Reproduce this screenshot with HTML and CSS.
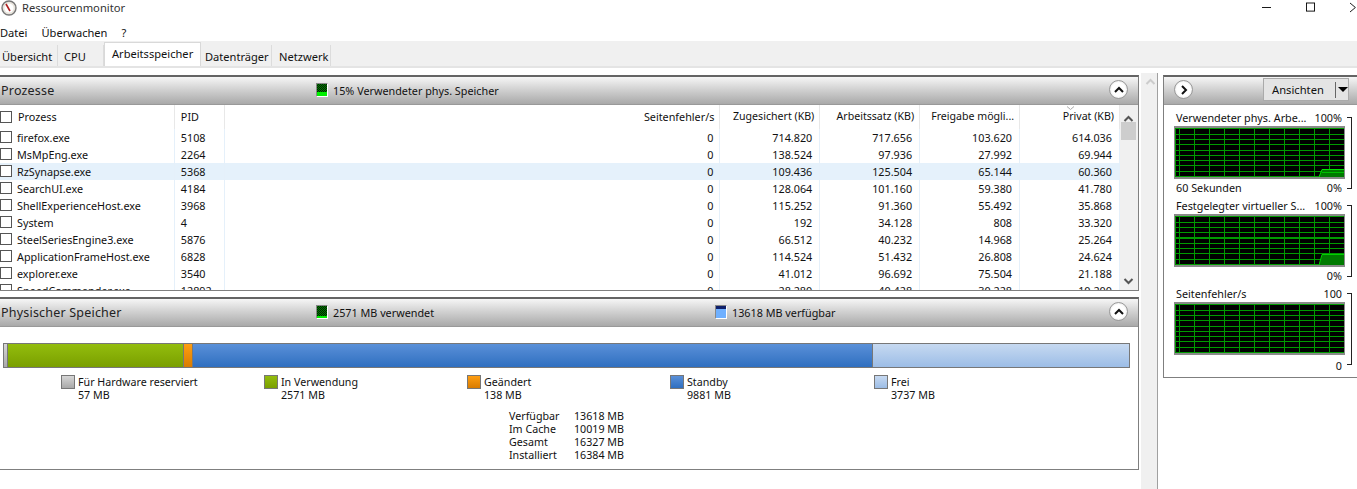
FILE: index.html
```html
<!DOCTYPE html>
<html lang="de">
<head>
<meta charset="utf-8">
<title>Ressourcenmonitor</title>
<link rel="stylesheet" href="styles.css">
</head>
<body>
<header class="titlebar">
  <svg class="appicon" width="16" height="16" viewBox="0 0 16 16"><circle cx="8" cy="8" r="7" fill="#e8e4dc" stroke="#777" stroke-width="1.4"/><circle cx="8" cy="8" r="4.6" fill="#fff"/><path d="M5 4l4 7" stroke="#b02020" stroke-width="1.6"/></svg>
  <span class="apptitle">Ressourcenmonitor</span>
  <span class="winctl">
    <svg width="11" height="11" viewBox="0 0 11 11"><path d="M0 5.5h10" stroke="#000"/></svg>
    <svg width="11" height="11" viewBox="0 0 11 11"><rect x=".5" y=".5" width="9" height="9" fill="none" stroke="#000"/></svg>
    <svg width="8" height="11" viewBox="0 0 8 11"><path d="M0 .5l6 5-6 5" fill="none" stroke="#000"/></svg>
  </span>
</header>
<nav class="menubar"><span>Datei</span><span>Überwachen</span><span>?</span></nav>
<nav class="tabs">
  <span class="tab t1">Übersicht</span><span class="tab t2">CPU</span><span class="tab active">Arbeitsspeicher</span><span class="tab t4">Datenträger</span><span class="tab t5">Netzwerk</span>
</nav>
<main class="workspace">
  <div class="leftcol">
    <section class="panel procs">
      <div class="phead">
        <span class="ptitle">Prozesse</span>
        <span class="pstat s-proc"><i class="led green"></i>15% Verwendeter phys. Speicher</span>
        <span class="round"><svg width="10" height="8" viewBox="0 0 10 8"><path d="M1 6l4-4 4 4" fill="none" stroke="#111" stroke-width="2"/></svg></span>
      </div>
      <div class="tablewrap">
        <div class="table">
          <div class="row hdr"><span class="c0"><i class="cb"></i><b class="hn">Prozess</b></span><span class="c1">PID</span><span class="c2">Seitenfehler/s</span><span class="c3">Zugesichert (KB)</span><span class="c4">Arbeitssatz (KB)</span><span class="c5">Freigabe mögli...</span><span class="c6">Privat (KB)<svg class="sort" width="9" height="5" viewBox="0 0 9 5"><path d="M1 .5l3.5 3 3.5-3" fill="none" stroke="#aaa"/></svg></span></div>
          <div class="row"><span class="c0"><i class="cb"></i>firefox.exe</span><span class="c1">5108</span><span class="c2">0</span><span class="c3">714.820</span><span class="c4">717.656</span><span class="c5">103.620</span><span class="c6">614.036</span></div>
          <div class="row"><span class="c0"><i class="cb"></i>MsMpEng.exe</span><span class="c1">2264</span><span class="c2">0</span><span class="c3">138.524</span><span class="c4">97.936</span><span class="c5">27.992</span><span class="c6">69.944</span></div>
          <div class="row sel"><span class="c0"><i class="cb"></i>RzSynapse.exe</span><span class="c1">5368</span><span class="c2">0</span><span class="c3">109.436</span><span class="c4">125.504</span><span class="c5">65.144</span><span class="c6">60.360</span></div>
          <div class="row"><span class="c0"><i class="cb"></i>SearchUI.exe</span><span class="c1">4184</span><span class="c2">0</span><span class="c3">128.064</span><span class="c4">101.160</span><span class="c5">59.380</span><span class="c6">41.780</span></div>
          <div class="row"><span class="c0"><i class="cb"></i>ShellExperienceHost.exe</span><span class="c1">3968</span><span class="c2">0</span><span class="c3">115.252</span><span class="c4">91.360</span><span class="c5">55.492</span><span class="c6">35.868</span></div>
          <div class="row"><span class="c0"><i class="cb"></i>System</span><span class="c1">4</span><span class="c2">0</span><span class="c3">192</span><span class="c4">34.128</span><span class="c5">808</span><span class="c6">33.320</span></div>
          <div class="row"><span class="c0"><i class="cb"></i>SteelSeriesEngine3.exe</span><span class="c1">5876</span><span class="c2">0</span><span class="c3">66.512</span><span class="c4">40.232</span><span class="c5">14.968</span><span class="c6">25.264</span></div>
          <div class="row"><span class="c0"><i class="cb"></i>ApplicationFrameHost.exe</span><span class="c1">6828</span><span class="c2">0</span><span class="c3">114.524</span><span class="c4">51.432</span><span class="c5">26.808</span><span class="c6">24.624</span></div>
          <div class="row"><span class="c0"><i class="cb"></i>explorer.exe</span><span class="c1">3540</span><span class="c2">0</span><span class="c3">41.012</span><span class="c4">96.692</span><span class="c5">75.504</span><span class="c6">21.188</span></div>
          <div class="row"><span class="c0"><i class="cb"></i>SpeedCommander.exe</span><span class="c1">12892</span><span class="c2">0</span><span class="c3">28.280</span><span class="c4">40.428</span><span class="c5">30.228</span><span class="c6">10.200</span></div>
        </div>
        <div class="scroll">
          <svg width="11" height="8" viewBox="0 0 11 8"><path d="M1.5 6l4-4 4 4" fill="none" stroke="#555" stroke-width="2"/></svg>
          <i class="thumb"></i>
          <svg class="down" width="11" height="8" viewBox="0 0 11 8"><path d="M1.5 2l4 4 4-4" fill="none" stroke="#555" stroke-width="2"/></svg>
        </div>
      </div>
    </section>
    <section class="panel phys">
      <div class="phead">
        <span class="ptitle">Physischer Speicher</span>
        <span class="pstat s-proc"><i class="led green2"></i>2571 MB verwendet</span>
        <span class="pstat s-free"><i class="led blue"></i>13618 MB verfügbar</span>
        <span class="round"><svg width="10" height="8" viewBox="0 0 10 8"><path d="M1 6l4-4 4 4" fill="none" stroke="#111" stroke-width="2"/></svg></span>
      </div>
      <div class="membar"><i class="seg hw"></i><i class="seg use"></i><i class="seg mod"></i><i class="seg stb"></i><i class="seg free"></i></div>
      <div class="legend">
        <div class="lg l1"><i class="sw hw"></i><span>Für Hardware reserviert<br>57 MB</span></div>
        <div class="lg l2"><i class="sw use"></i><span>In Verwendung<br>2571 MB</span></div>
        <div class="lg l3"><i class="sw mod"></i><span>Geändert<br>138 MB</span></div>
        <div class="lg l4"><i class="sw stb"></i><span>Standby<br>9881 MB</span></div>
        <div class="lg l5"><i class="sw free"></i><span>Frei<br>3737 MB</span></div>
      </div>
      <dl class="totals">
        <dt>Verfügbar</dt><dd>13618 MB</dd>
        <dt>Im Cache</dt><dd>10019 MB</dd>
        <dt>Gesamt</dt><dd>16327 MB</dd>
        <dt>Installiert</dt><dd>16384 MB</dd>
      </dl>
    </section>
  </div>
  <div class="gutter"><svg width="11" height="8" viewBox="0 0 11 8"><path d="M1.5 6l4-4 4 4" fill="none" stroke="#ccc" stroke-width="2"/></svg></div>
  <aside class="panel side">
    <div class="phead shead">
      <span class="round"><svg width="8" height="10" viewBox="0 0 8 10"><path d="M2 1l4 4-4 4" fill="none" stroke="#111" stroke-width="2"/></svg></span>
      <span class="viewbtn"><span class="vlabel">Ansichten</span><i class="vsep"></i><i class="varrow"></i></span>
    </div>
    <div class="graph">
      <div class="gtop"><span>Verwendeter phys. Arbe...</span><span class="gmax">100%</span></div>
      <div class="chart"><svg class="bump" width="25" height="9" viewBox="0 0 25 9"><path d="M0 9l3-7h22v7z" fill="#007a00"/><path d="M0 9l3-7.500h22" fill="none" stroke="#00e000"/><path d="M3 4.500h22" stroke="#00c000"/></svg></div>
      <div class="gbot"><span>60 Sekunden</span><span class="gmin">0%</span></div>
      <i class="brace"></i>
    </div>
    <div class="graph">
      <div class="gtop"><span>Festgelegter virtueller S...</span><span class="gmax">100%</span></div>
      <div class="chart"><svg class="bump" width="25" height="11" viewBox="0 0 25 11"><path d="M0 11l3-10h22v10z" fill="#007a00"/><path d="M0 11l3-10.500h22" fill="none" stroke="#00d000"/></svg></div>
      <div class="gbot"><span></span><span class="gmin">0%</span></div>
      <i class="brace"></i>
    </div>
    <div class="graph">
      <div class="gtop"><span>Seitenfehler/s</span><span class="gmax">100</span></div>
      <div class="chart"></div>
      <div class="gbot low"><span></span><span class="gmin">0</span></div>
      <i class="brace"></i>
    </div>
  </aside>
</main>
</body>
</html>
```
FILE: styles.css
```css
* { box-sizing: border-box; }
html, body { margin: 0; height: 489px; overflow: hidden; background: #fff; }
body { font: 10.8px/13px "Noto Sans", sans-serif; color: #111; width: 1357px; }
i { display: block; }
.titlebar { height: 24px; display: flex; align-items: center; padding: 0 0 9px 1px; position: relative; }
.appicon { margin-right: 5px; }
.apptitle { font-size: 11.2px; color: #333; }
.winctl { margin-left: auto; display: flex; gap: 34px; width: 95px; align-items: center; }
.menubar { height: 17px; display: flex; gap: 14px; align-items: center; font-size: 11.1px; }
.tabs { height: 27px; background: #f0f0f0; display: flex; align-items: flex-end; border-bottom: 2px solid #e4e4e4; }
.tab { height: 21px; padding-top: 5px; border-right: 1px solid #dcdcdc; font-size: 11.1px; }
.t1 { width: 58px; padding-left: 2px; }
.t2 { width: 46px; padding-left: 6px; }
.t4 { width: 71px; padding-left: 4px; }
.t5 { width: 59px; padding-left: 7px; }
.active { width: 97px; height: 24px; background: #fff; border: 1px solid #d9d9d9; border-bottom: 0; padding: 4px 0 0 7px; }
.workspace { display: flex; align-items: flex-start; padding-top: 7px; height: 421px; }
.leftcol { width: 1139px; display: flex; flex-direction: column; gap: 6px; flex: none; }
.panel { border: 1px solid #7f7f7f; border-top: 2px solid #646464; border-left: 0; background: #fff; }
.phead { height: 28px; background: linear-gradient(#f6f6f6, #d6d6d6 40%, #a9a9a9); border-bottom: 1px solid #999; display: flex; align-items: center; position: relative; }
.ptitle { font-size: 12.5px; padding: 0 0 1px 1px; letter-spacing: .2px; color: #222; }
.pstat { position: absolute; left: 316px; top: 6px; display: flex; align-items: center; gap: 5px; }
.s-free { left: 715px; }
.led { width: 12px; height: 14px; border: 1px solid #888; border-right-color: #fff; border-bottom-color: #fff; background: repeating-conic-gradient(#002000 0 25%, #007c00 0 50%) 0 0 / 2px 2px; box-shadow: inset 0 -4px 0 #00f000; }
.green2 { box-shadow: inset 0 -2px 0 #00f000; }
.blue { background: linear-gradient(#10206a 3px, #6fb0ff 3px); box-shadow: none; }
.round { width: 19px; height: 19px; border-radius: 50%; border: 1px solid #999; background: radial-gradient(#fff 55%, #d0d0d0); display: flex; align-items: center; justify-content: center; position: absolute; right: 10px; top: 3px; }
.procs { height: 216px; }
.tablewrap { display: flex; height: 185px; overflow: hidden; }
.table { width: 1120px; flex: none; }
.row { display: flex; height: 17px; }
.hdr { height: 24px; align-items: stretch; }
.row span { display: block; padding-top: 2px; white-space: nowrap; border-right: 1px solid #e5f0fa; }
.hdr span { padding-top: 5px; border-right-color: #e8e8e8; position: relative; }
.sel { background: #e5f1fb; }
.c0 { width: 175px; display: flex !important; position: relative; padding-left: 17px; }
.c1 { width: 50px; padding-left: 6px; }
.c2 { width: 496px; text-align: right; padding-right: 6px; }
.c3, .c4, .c5, .c6 { width: 100px; text-align: right; padding-right: 7px; }
.hdr .c2 { padding-right: 5px; }
.hdr .c3, .hdr .c4, .hdr .c5, .hdr .c6 { padding-right: 5px; font-size: 10.6px; }
.cb { position: absolute; left: 0; top: 2px; width: 12px; height: 12px; border: 1px solid #555; background: #fff; }
.hdr .cb { top: 6px; }
.hn { font-weight: normal; padding-left: 1px; }
.sort { position: absolute; right: 44px; top: 1px; }
.scroll { width: 18px; background: #f0f0f0; position: relative; padding: 7px 0 0 3px; }
.thumb { position: absolute; left: 1px; top: 17px; width: 15px; height: 18px; background: #cdcdcd; }
.down { position: absolute; left: 3px; bottom: 5px; }
.phys { height: 173px; }
.membar { display: flex; margin: 16px 8px 0 3px; height: 25px; border: 1px solid #777; }
.seg { height: 100%; }
.seg + .seg { border-left: 1px solid #777; }
.membar .hw { width: 3px; }
.membar .use { width: 176px; }
.membar .mod { width: 9px; }
.membar .stb { width: 680px; }
.membar .free { flex: 1; }
.hw { background: linear-gradient(#d6d6d6, #a9a9a9); }
.use { background: linear-gradient(#93bd0d, #7a9f00); }
.mod { background: linear-gradient(#ff9e12, #d97c00); }
.stb { background: linear-gradient(#5a90d8, #2f6fc0); }
.free { background: linear-gradient(#c6d9f1, #9cbde6); }
.legend { display: flex; height: 34px; margin-top: 8px; font-size: 10.7px; }
.lg { display: flex; gap: 3px; line-height: 13px; }
.sw { width: 14px; height: 14px; border: 1px solid #777; flex: none; position: relative; top: -1px; }
.l1 { margin-left: 61px; width: 203px; }
.l2 { width: 203px; }
.l3 { width: 203px; }
.l4 { width: 204px; }
.totals { display: grid; grid-template-columns: 65px auto; margin: 0 0 0 509px; line-height: 13px; font-size: 10.7px; }
.totals dd { margin: 0; }
.gutter { width: 17px; flex: none; margin: -2px 0 0 2px; height: 416px; background: #f0f0f0; border-right: 1px solid #a0a0a0; padding: 5px 0 0 4px; }
.gutter svg { display: block; }
.side { width: 194px; height: 303px; margin-left: 5px; flex: none; border-left: 1px solid #7f7f7f; border-right: 0; }
.shead { height: 28px; }
.shead .round { left: 10px; right: auto; }
.viewbtn { position: absolute; left: 99px; top: 1px; width: 86px; height: 23px; border: 1px solid #aaa; background: #e4e4e4; display: flex; align-items: center; }
.vlabel { padding-left: 8px; font-size: 11.2px; width: 71px; }
.vsep { width: 1px; height: 16px; background: #666; }
.varrow { margin-left: 2px; border: 5px solid transparent; border-top: 5px solid #000; border-bottom: 0; width: 0; height: 0; }
.graph { position: relative; width: 183px; margin-left: 10px; height: 88px; }
.gtop, .gbot { display: flex; justify-content: space-between; width: 171px; padding: 0 3px 0 2px; white-space: nowrap; }
.gtop { padding-top: 6px; height: 21px; }
.gbot { height: 14px; padding-top: 2px; }
.low { padding-top: 4px; }
.chart { width: 171px; height: 53px; position: relative; border: solid #8a8a8a; border-width: 2px 1px 2px 1px; background-color: #000;
  background-image: repeating-linear-gradient(90deg, #009a00 0 1px, transparent 1px 15px), repeating-linear-gradient(0deg, #009a00 0 1px, transparent 1px 5.3px);
  background-position: 4px 0, 0 0; }
.bump { position: absolute; right: 0; bottom: 0; }
.brace { position: absolute; left: 173px; top: 12px; width: 5px; height: 72px; border: solid #222; border-width: 1px 1px 1px 0; }
```
